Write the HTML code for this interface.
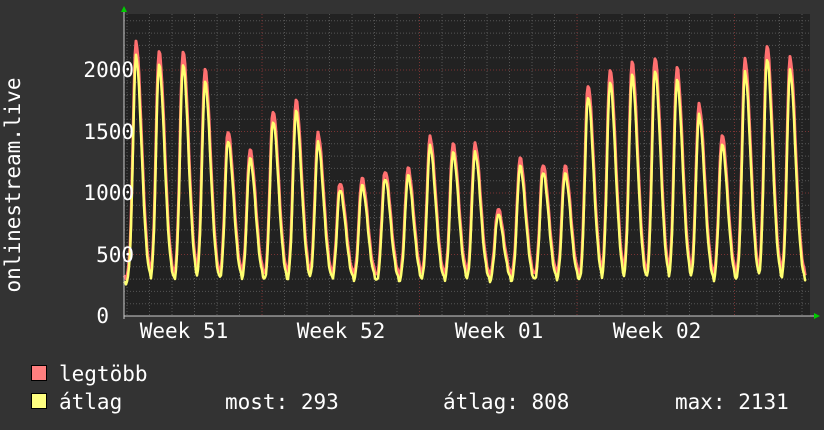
<!DOCTYPE html>
<html><head><meta charset="utf-8"><style>
html,body{margin:0;padding:0;background:#333;}
svg{display:block}
text{font-family:"DejaVu Sans Mono","Liberation Mono",monospace;fill:#fff;font-size:21px}
</style></head><body>
<svg id="g" width="824" height="430" xmlns="http://www.w3.org/2000/svg">
<rect width="824" height="430" fill="#333"/>
<rect x="124" y="14" width="686" height="302" fill="#222"/>
<g id="grid"></g>
<path id="mx" fill="none" stroke="#ff7070" stroke-width="3" stroke-linejoin="round"/>
<path id="av" fill="none" stroke="#ffff70" stroke-width="2.5" stroke-linejoin="round"/>
<line x1="124" y1="316" x2="814" y2="316" stroke="#ccc" stroke-width="1"/>
<line x1="124" y1="12" x2="124" y2="319" stroke="#ccc" stroke-width="1"/>
<polygon points="121,12 127,12 124,6" fill="#0c0"/>
<polygon points="814,313 814,319 820,316" fill="#0c0"/>
<text x="134" y="77" text-anchor="end">2000</text>
<text x="134" y="139" text-anchor="end">1500</text>
<text x="134" y="200" text-anchor="end">1000</text>
<text x="134" y="262" text-anchor="end">500</text>
<text x="109" y="323" text-anchor="end">0</text>
<text x="184" y="338" text-anchor="middle">Week 51</text>
<text x="341" y="338" text-anchor="middle">Week 52</text>
<text x="499" y="338" text-anchor="middle">Week 01</text>
<text x="657" y="338" text-anchor="middle">Week 02</text>
<text transform="translate(20,185) rotate(-90)" text-anchor="middle">onlinestream.live</text>
<rect x="31.5" y="365.5" width="15" height="15" fill="#ff7f7f" stroke="#000"/>
<rect x="31.5" y="393.5" width="15" height="15" fill="#ffff80" stroke="#000"/>
<text x="59" y="381">legtöbb</text>
<text x="59" y="409">átlag</text>
<text x="225" y="409">most: 293</text>
<text x="443" y="409">átlag: 808</text>
<text x="675" y="409">max: 2131</text>
</svg>
<script>
var g=document.getElementById('grid'),s='';
function Y(v){return 316-v*0.123;}
for(var v=100;v<2500;v+=100){var y=Y(v);var maj=v%500==0;
s+='<line x1="124" x2="810" y1="'+y+'" y2="'+y+'" stroke="'+(maj?'#7a3333':'#555')+'" stroke-dasharray="1,2"/>';}
for(var x=127;x<810;x+=22.5){var r=((x-104.5)/157.5)%1;var maj=r<0.01||r>0.99;
s+='<line y1="14" y2="316" x1="'+x+'" x2="'+x+'" stroke="'+(maj?'#7a3333':'#555')+'" stroke-dasharray="1,2"/>';}
g.innerHTML=s;
var pk=[[136,2220],[159,2150],[183,2150],[205,2000],[228,1500],[250,1350],[273,1670],[296,1750],[318,1480],[340,1080],[362,1120],[385,1180],[408,1200],[430,1450],[453,1400],[475,1400],[498,870],[520,1280],[543,1230],[565,1220],[588,1880],[610,2000],[632,2060],[655,2100],[677,2020],[699,1720],[722,1470],[745,2080],[767,2200],[790,2100]];
function val(x,sc,base){var best=0;for(var i=0;i<pk.length;i++){var d=x-pk[i][0];
var f;if(d<0)f=Math.exp(-d*d/(2*3*3));else f=Math.exp(-d*d/(2*5.5*5.5));
var p=(pk[i][1]*sc-base)*f;if(p>best)best=p;}return base+best;}
function path(sc,base){var d='';for(var x=124;x<=806;x+=1){var v=val(x,sc,base)+((x*37)%7-3)*5;d+=(x==124?'M':'L')+x+','+Y(v).toFixed(1);}return d;}
document.getElementById('mx').setAttribute('d',path(1,310));
document.getElementById('av').setAttribute('d',path(0.95,265));
</script>
</body></html>
